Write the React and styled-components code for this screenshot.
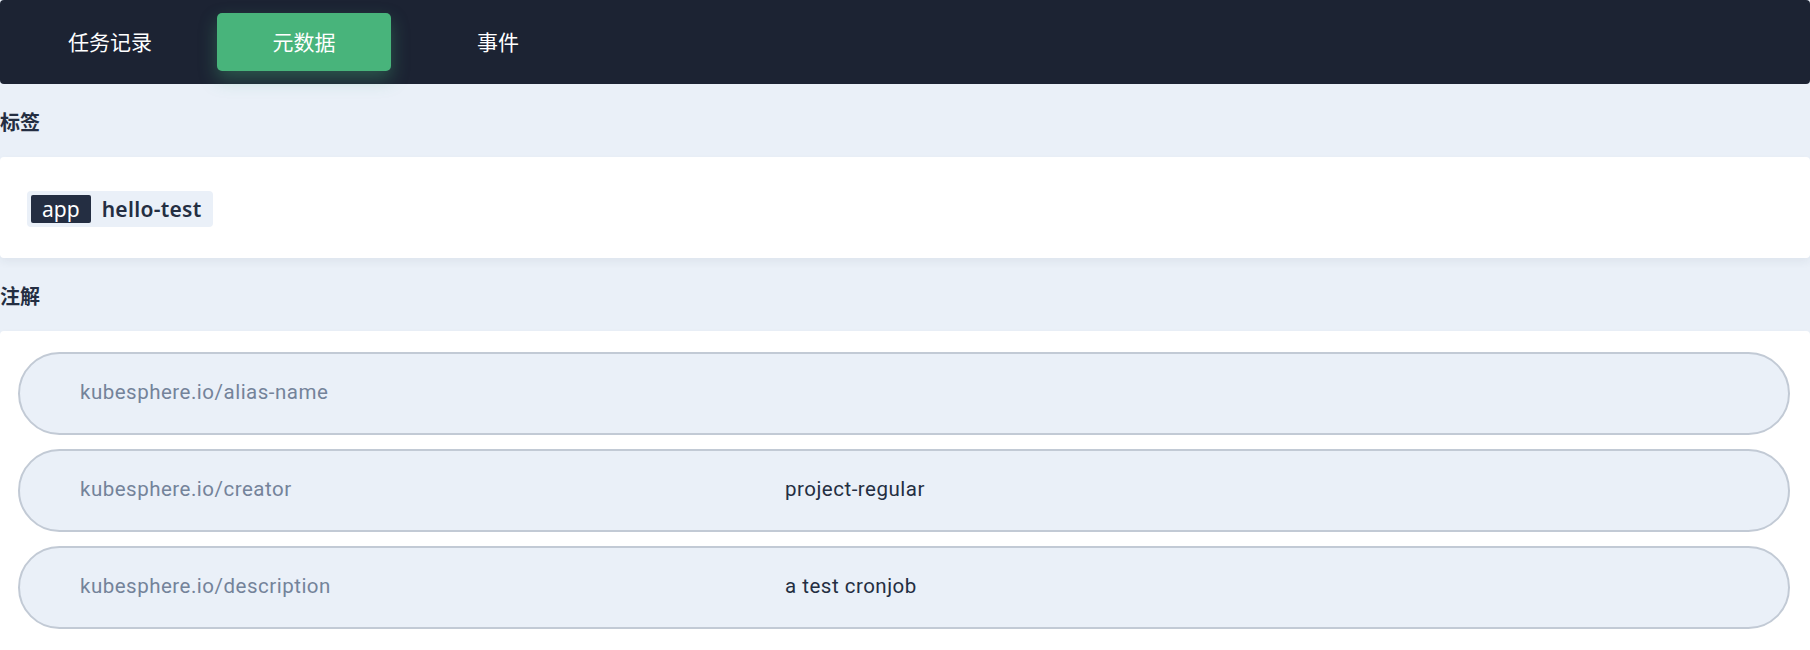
import React from 'react';
import styled, { createGlobalStyle } from 'styled-components';

const GlobalStyle = createGlobalStyle`
  html, body {
    margin: 0;
    padding: 0;
    background: #eaf0f8;
  }
  body {
    font-family: "Noto Sans", "Noto Sans CJK SC", sans-serif;
    color: #242e42;
  }
  * { box-sizing: border-box; }
`;

const Page = styled.div`
  display: flex;
  flex-direction: column;
  width: 1810px;
  height: 650px;
  overflow: hidden;
`;

const TabBar = styled.div`
  display: flex;
  align-items: flex-start;
  gap: 20px;
  height: 84px;
  padding: 13px 23px 0;
  background: #1c2333;
  border-radius: 4px;
`;

const Tab = styled.div`
  display: flex;
  align-items: center;
  justify-content: center;
  width: 174px;
  height: 58px;
  padding-bottom: 3px;
  border-radius: 5px;
  font-family: "Noto Sans CJK SC", sans-serif;
  font-size: 21px;
  font-weight: 400;
  color: #ffffff;
  background: ${p => (p.$active ? '#48b47b' : 'transparent')};
  box-shadow: ${p => (p.$active ? '0 8px 18px rgba(72, 180, 123, 0.35)' : 'none')};
  cursor: pointer;
`;

const SectionTitle = styled.div`
  padding: 28px 0 25px;
  line-height: 20px;
  font-family: "Noto Sans CJK SC", sans-serif;
  font-size: 20px;
  font-weight: 600;
  color: #242e42;
`;

const Panel = styled.div`
  background: #ffffff;
  border-radius: 4px;
  box-shadow: 0 4px 8px rgba(36, 46, 66, 0.06);
`;

const LabelPanel = styled(Panel)`
  padding: 34px 27px 31px;
`;

const Tag = styled.div`
  display: inline-flex;
  align-items: center;
  gap: 11px;
  height: 36px;
  padding: 4px 11px 4px 4px;
  border-radius: 4px;
  background: #eaf0f8;
`;

const TagKey = styled.span`
  display: flex;
  align-items: center;
  height: 28px;
  padding: 0 11px;
  border-radius: 2px;
  background: #242e42;
  color: #ffffff;
  font-size: 21px;
`;

const TagValue = styled.span`
  font-size: 21px;
  font-weight: 600;
  letter-spacing: 0.3px;
  color: #242e42;
`;

const AnnotationPanel = styled(Panel)`
  flex: 1;
  display: flex;
  flex-direction: column;
  gap: 14px;
  padding: 21px 20px 0 18px;
  border-radius: 4px 4px 0 0;
`;

const Row = styled.div`
  display: grid;
  grid-template-columns: 705px 1fr;
  align-items: center;
  height: 83px;
  padding: 0 0 3px 60px;
  border: 2px solid #c2cad5;
  border-radius: 42px;
  background: #eaf0f8;
  font-family: Roboto, "Noto Sans", sans-serif;
  font-size: 20.5px;
  letter-spacing: 0.5px;
`;

const Key = styled.span`
  color: #74839a;
`;

const Value = styled.span`
  color: #242e42;
`;

const tabs = ['任务记录', '元数据', '事件'];

const annotations = [
  { key: 'kubesphere.io/alias-name', value: '' },
  { key: 'kubesphere.io/creator', value: 'project-regular' },
  { key: 'kubesphere.io/description', value: 'a test cronjob' },
];

export default function App() {
  return (
    <Page>
      <GlobalStyle />
      <TabBar>
        {tabs.map(t => (
          <Tab key={t} $active={t === '元数据'}>{t}</Tab>
        ))}
      </TabBar>

      <SectionTitle>标签</SectionTitle>
      <LabelPanel>
        <Tag>
          <TagKey>app</TagKey>
          <TagValue>hello-test</TagValue>
        </Tag>
      </LabelPanel>

      <SectionTitle>注解</SectionTitle>
      <AnnotationPanel>
        {annotations.map(a => (
          <Row key={a.key}>
            <Key>{a.key}</Key>
            <Value>{a.value}</Value>
          </Row>
        ))}
      </AnnotationPanel>
    </Page>
  );
}
